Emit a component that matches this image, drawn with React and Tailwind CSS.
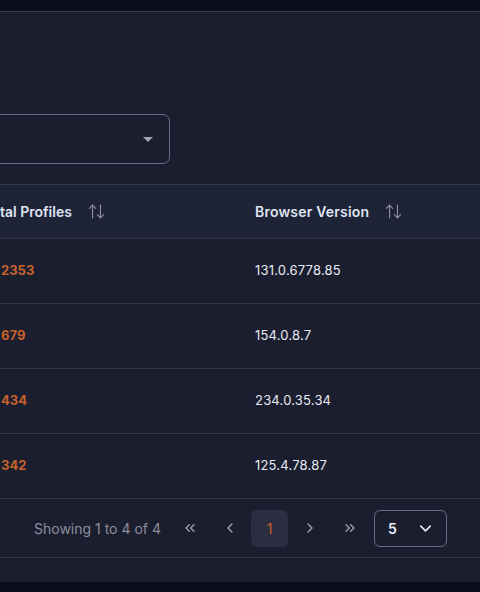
import { ArrowUpDown, ChevronsLeft, ChevronLeft, ChevronRight, ChevronsRight, ChevronDown } from 'lucide-react'

// the visible slice of the first column as it appears at the left edge
const ROWS = [
  { profiles: '2353', version: '131.0.6778.85' },
  { profiles: '679', version: '154.0.8.7' },
  { profiles: '434', version: '234.0.35.34' },
  { profiles: '342', version: '125.4.78.87' },
]

export default function App() {
  return (
    <div className="w-[480px] h-[592px] overflow-hidden bg-[#1b1e2e] flex flex-col" style={{ fontFamily: 'Inter, "Noto Sans", sans-serif' }}>
      {/* Top bar */}
      <div className="h-[12px] bg-[#0b0e1c] border-b border-[#3b3e52] shrink-0" />

      {/* Filter select */}
      <div className="pt-[102px] pb-[20px]">
        <div className="ml-[-120px] w-[290px] h-[50px] rounded-[7px] border border-[#676c80] flex items-center justify-end pr-[16px]">
          <div className="w-0 h-0 border-l-[5px] border-r-[5px] border-t-[5px] border-l-transparent border-r-transparent border-t-[#a3a6b1]" />
        </div>
      </div>

      {/* Table */}
      <div className="border-t border-[#33374a]">
        <div className="h-[54px] bg-[#1f2336] border-b border-[#33374a] flex items-center">
          <div className="w-[255px] flex items-center gap-[15px]">
            <span className="text-[14px] font-semibold text-[#dfe5f2]">tal Profiles</span>
            <ArrowUpDown size={19} strokeWidth={1.4} className="text-[#8e92a2]" />
          </div>
          <div className="flex items-center gap-[15px]">
            <span className="text-[14px] font-semibold text-[#dfe5f2] tracking-[0.2px]">Browser Version</span>
            <ArrowUpDown size={19} strokeWidth={1.4} className="text-[#8e92a2]" />
          </div>
        </div>

        {ROWS.map(r => (
          <div key={r.profiles} className="h-[65px] border-b border-[#33374a] flex items-center">
            <div className="w-[255px] pl-[1px] text-[13px] font-bold text-[#c4622d]">{r.profiles}</div>
            <div className="text-[13px] text-[#e8ebf3] tracking-[0.2px]">{r.version}</div>
          </div>
        ))}

        {/* Pagination */}
        <div className="h-[59px] border-b border-[#33374a] flex items-center pl-[34px]">
          <span className="text-[14px] text-[#8b8e9c] mr-[10px]">Showing 1 to 4 of 4</span>
          <div className="flex items-center gap-[3px]">
            <button className="w-[37px] h-[37px] flex items-center justify-center text-[#a0a3b1]">
              <ChevronsLeft size={16} strokeWidth={2} />
            </button>
            <button className="w-[37px] h-[37px] flex items-center justify-center text-[#a0a3b1]">
              <ChevronLeft size={16} strokeWidth={2} />
            </button>
            <button className="w-[37px] h-[37px] rounded-[6px] bg-[#2a2e40] flex items-center justify-center text-[14px] text-[#c4622d]">
              1
            </button>
            <button className="w-[37px] h-[37px] flex items-center justify-center text-[#a0a3b1]">
              <ChevronRight size={16} strokeWidth={2} />
            </button>
            <button className="w-[37px] h-[37px] flex items-center justify-center text-[#a0a3b1]">
              <ChevronsRight size={16} strokeWidth={2} />
            </button>
          </div>
          <div className="ml-[6px] w-[73px] h-[37px] rounded-[6px] border border-[#676c80] flex items-center justify-between pl-[13px] pr-[11px]">
            <span className="text-[14px] font-semibold text-[#e8ebf3]">5</span>
            <ChevronDown size={19} strokeWidth={2} className="text-[#e8ebf3]" />
          </div>
        </div>
      </div>

      <div className="flex-1" />
      <div className="h-[10px] bg-[#0b0e1c] shrink-0" />
    </div>
  )
}
